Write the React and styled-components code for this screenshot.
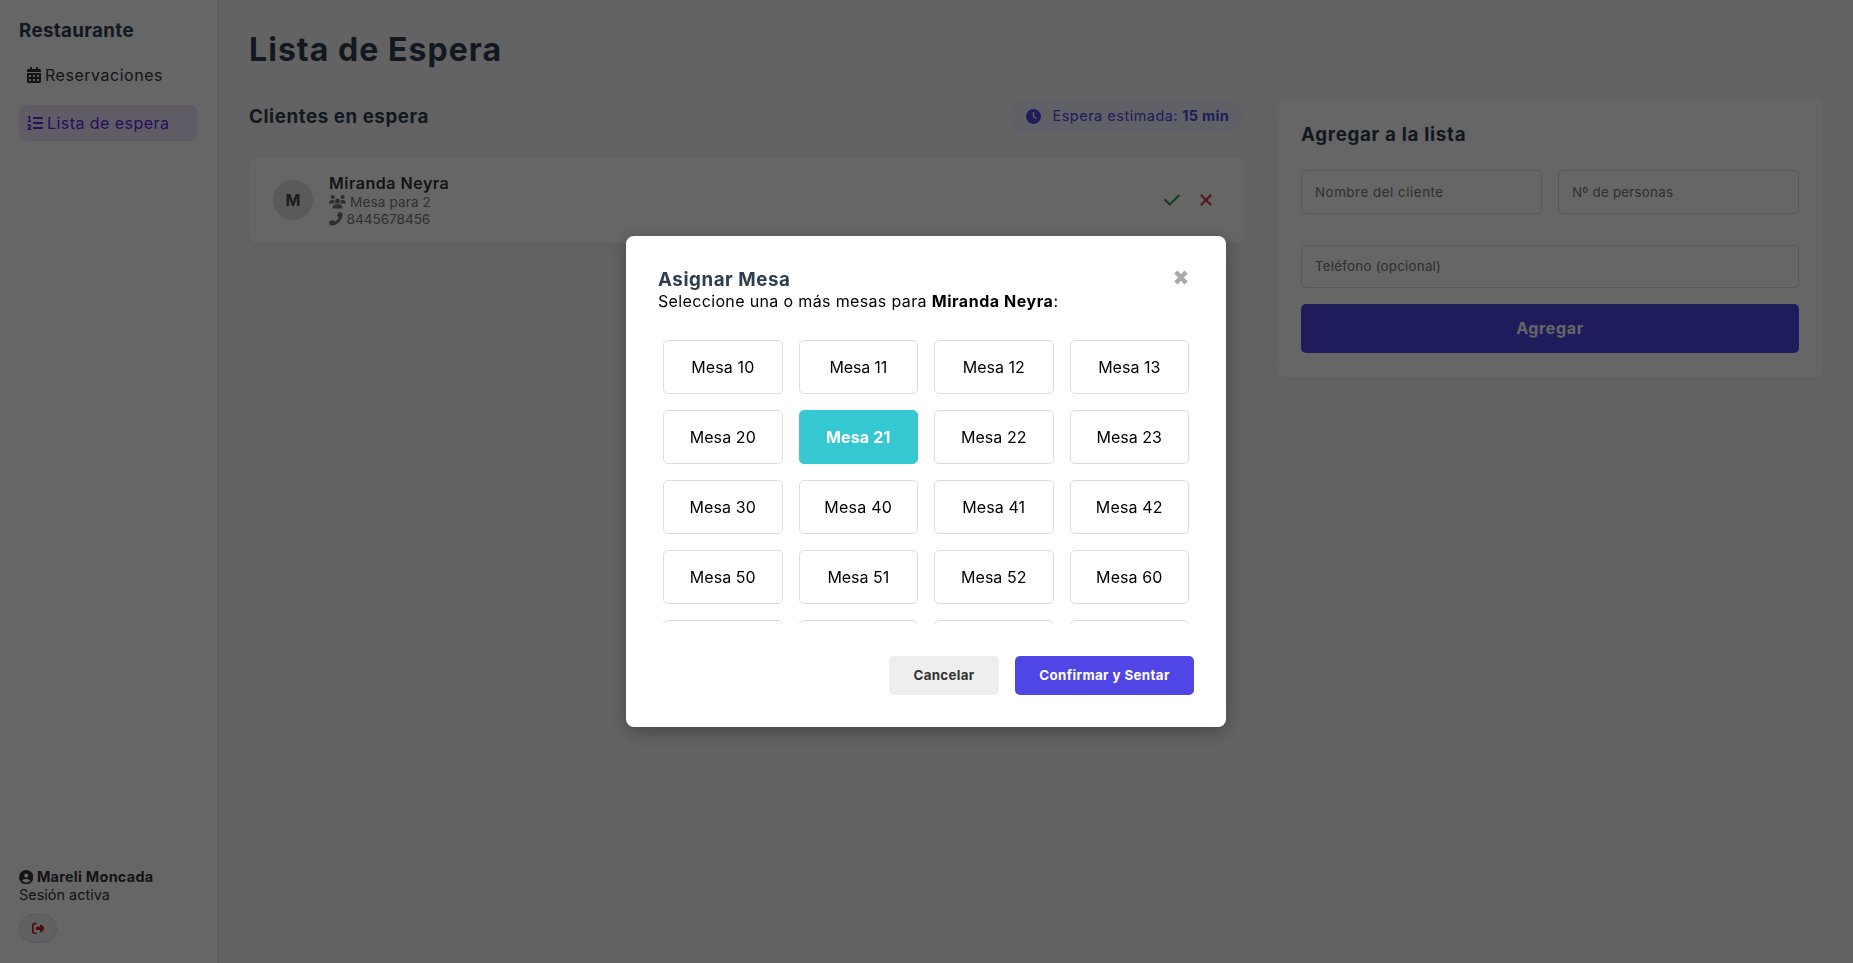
import React from "react";
import styled, { createGlobalStyle, css } from "styled-components";
import {
  FaCalendarDays,
  FaListOl,
  FaCircleUser,
  FaRightFromBracket,
  FaClock,
  FaUsers,
  FaPhoneFlip,
  FaCheck,
  FaXmark,
} from "react-icons/fa6";

const GlobalStyle = createGlobalStyle`
  *, *::before, *::after { box-sizing: border-box; }
  body {
    margin: 0;
    font-family: "Inter", "Liberation Sans", sans-serif;
    font-size: 16px;
    color: #333;
    background: #f7f7f7;
    overflow: hidden;
  }
  h1, h3, p { margin: 0; }
  button, input { font-family: inherit; }
  svg { display: block; flex: none; }
`;

const Page = styled.div`
  display: flex;
  height: 100vh;
`;

/* Tracking is given in em, per label */
const Label = styled.span`
  letter-spacing: ${(p) => p.$track || 0}em;
  font-weight: ${(p) => p.$weight || "inherit"};
  white-space: nowrap;
`;

const Heading = styled.h3`
  height: 23px;
  font-size: 18.72px;
  line-height: 24px;
  font-weight: 700;
  color: #2c3e50;
  letter-spacing: ${(p) => p.$track}em;
`;

/* Sidebar */
const Sidebar = styled.aside`
  display: flex;
  flex-direction: column;
  flex: none;
  width: 219px;
  padding: 19px 20px 20px 19px;
  background: #fff;
  border-right: 1px solid #ddd;
`;

const Nav = styled.nav`
  display: flex;
  flex-direction: column;
  gap: 12px;
  margin-top: 15px;
`;

const NavItem = styled.a`
  display: flex;
  align-items: center;
  gap: 4px;
  height: 36px;
  padding: 0 8px;
  border-radius: 8px;
  font-weight: 400;
  color: ${(p) => (p.$active ? "#5f22e8" : "#333")};
  background: ${(p) => (p.$active ? "#ede7ff" : "transparent")};
`;

const CalendarIcon = styled(FaCalendarDays)`
  width: 14px;
  height: 16px;
`;

const UsersIcon = styled(FaUsers)`
  width: 17px;
  height: 13.6px;
`;

const UserBox = styled.div`
  margin-top: auto;
  font-size: 14.4px;
  line-height: 18px;
`;

const UserName = styled.div`
  display: flex;
  align-items: center;
  gap: 3.5px;
  font-weight: 700;
`;

const LogoutButton = styled.button`
  display: flex;
  align-items: center;
  justify-content: center;
  width: 38px;
  height: 29px;
  margin-top: 10px;
  padding: 0;
  border: 1px solid #ddd;
  border-radius: 15px;
  background: #f0f2f5;
  color: #c8141e;
`;

/* Main area */
const Main = styled.main`
  flex: 1;
  padding: 30px;
`;

const Title = styled.h1`
  margin-bottom: 30px;
  font-size: 32px;
  line-height: 39px;
  font-weight: 700;
  color: #2c3e50;
  letter-spacing: 0.033em;
`;

const Columns = styled.div`
  display: grid;
  grid-template-columns: 1fr 546px;
  gap: 32px;
  align-items: start;
`;

const ListHeader = styled.div`
  display: flex;
  align-items: center;
  justify-content: space-between;
  height: 34px;
  margin-bottom: 24px;
`;

const WaitPill = styled.div`
  display: flex;
  align-items: center;
  width: 235px;
  height: 34px;
  padding-left: 16px;
  border-radius: 17px;
  background: #eef2ff;
  color: #4f46e5;
  font-size: 14.4px;
  font-weight: 400;
`;

const PillText = styled.span`
  display: flex;
  gap: 4px;
  margin-left: 11.5px;
  padding-bottom: 1px;
`;

const card = css`
  background: #fff;
  border-radius: 8px;
  box-shadow: 0 4px 12px rgba(0, 0, 0, 0.04);
`;

const ClientCard = styled.article`
  ${card}
  display: flex;
  align-items: center;
  gap: 16px;
  height: 86px;
  padding: 0 30px 0 24px;
`;

const Avatar = styled.div`
  display: grid;
  place-items: center;
  width: 40px;
  height: 40px;
  border-radius: 50%;
  background: #e0e0e0;
  color: #444;
  font-weight: 700;
`;

const ClientInfo = styled.div`
  flex: 1;
`;

const ClientName = styled.div`
  height: 20.5px;
  line-height: 20px;
  font-weight: 600;
`;

const ClientDetail = styled.div`
  display: flex;
  align-items: center;
  gap: 4px;
  height: 17px;
  font-size: 13.6px;
  color: #777;
`;

const Actions = styled.div`
  display: flex;
  align-items: center;
  gap: 16px;
`;

const IconButton = styled.button`
  display: flex;
  padding: 0;
  border: 0;
  background: none;
  font-size: 18px;
  color: ${(p) => p.$color};
`;

const FormCard = styled.form`
  ${card}
  padding: 24px;
`;

const FieldRow = styled.div`
  display: grid;
  grid-template-columns: repeat(${(p) => p.$cols}, 1fr);
  gap: 16px;
  margin-top: ${(p) => p.$top}px;
`;

const Input = styled.input`
  width: 100%;
  height: ${(p) => p.$height}px;
  padding: 0 13px ${(p) => (p.$height % 2 ? 1 : 0)}px;
  border: 1px solid #ddd;
  border-radius: 5px;
  background: #fff;
  font-size: 13.33px;
  letter-spacing: ${(p) => p.$track}em;
  outline: none;
  &::placeholder { color: #757575; }
`;

const AddButton = styled.button`
  width: 100%;
  height: 49px;
  margin-top: 16px;
  padding: 0 0 1px;
  border: 0;
  border-radius: 5px;
  background: #4f46e5;
  color: #fff;
  font-size: 16px;
  font-weight: 700;
`;

/* Modal */
const Overlay = styled.div`
  position: fixed;
  inset: 0;
  display: grid;
  place-items: center;
  padding-right: 1px;
  background: rgba(0, 0, 0, 0.6);
`;

const Dialog = styled.section`
  width: 600px;
  padding: 32px;
  border-radius: 8px;
  background: #fff;
  color: #000;
  box-shadow: 0 5px 20px rgba(0, 0, 0, 0.3);
`;

const DialogTop = styled.header`
  display: flex;
  justify-content: space-between;
  height: 23px;
`;

const CloseButton = styled.button`
  display: flex;
  align-self: flex-start;
  margin: 2px 6px 0 0;
  padding: 0;
  border: 0;
  background: none;
  color: #aaa;
`;

const Prompt = styled.p`
  display: flex;
  line-height: 20px;
`;

const TableGrid = styled.div`
  display: grid;
  grid-template-columns: repeat(4, 1fr);
  grid-auto-rows: 54px;
  gap: 16px;
  height: 289px;
  margin-top: 24px;
  padding: 5px;
  overflow: hidden;
`;

const TableOption = styled.div`
  display: grid;
  place-items: center;
  border: 1px solid ${(p) => (p.$selected ? "#35c8d3" : "#ddd")};
  border-radius: 5px;
  background: ${(p) => (p.$selected ? "#35c8d3" : "#fff")};
  color: ${(p) => (p.$selected ? "#fff" : "#000")};
  font-weight: ${(p) => (p.$selected ? 700 : 400)};
`;

const DialogActions = styled.footer`
  display: flex;
  justify-content: flex-end;
  gap: 16px;
  margin-top: 32px;
`;

const DialogButton = styled.button`
  width: ${(p) => (p.$primary ? 179 : 110)}px;
  height: 39px;
  padding: 0 0 1px;
  border: 0;
  border-radius: 5px;
  background: ${(p) => (p.$primary ? "#4f46e5" : "#eee")};
  color: ${(p) => (p.$primary ? "#fff" : "#333")};
  font-size: 13.33px;
  font-weight: 700;
`;

const TABLES = [
  [10, 0.008], [11, -0.01], [12, 0.002], [13, 0.001],
  [20, 0.005], [21, 0.009], [22, 0.002], [23, 0],
  [30, 0.006], [40, 0.015], [41, 0.005], [42, 0.01],
  [50, 0.005], [51, -0.002], [52, 0.002], [60, 0.005],
];

export default function App() {
  return (
    <>
      <GlobalStyle />
      <Page>
        <Sidebar>
          <Heading $track={0.02}>Restaurante</Heading>
          <Nav>
            <NavItem>
              <CalendarIcon />
              <Label $track={0.033}>Reservaciones</Label>
            </NavItem>
            <NavItem $active>
              <FaListOl size={16} />
              <Label $track={0.028}>Lista de espera</Label>
            </NavItem>
          </Nav>
          <UserBox>
            <UserName>
              <FaCircleUser size={14.4} />
              <Label $track={0.019}>Mareli Moncada</Label>
            </UserName>
            <Label $track={0.002}>Sesión activa</Label>
            <LogoutButton type="button" aria-label="Salir">
              <FaRightFromBracket size={12.8} />
            </LogoutButton>
          </UserBox>
        </Sidebar>

        <Main>
          <Title>Lista de Espera</Title>
          <Columns>
            <section>
              <ListHeader>
                <Heading $track={0.031}>Clientes en espera</Heading>
                <WaitPill>
                  <FaClock size={15} />
                  <PillText>
                    <Label $track={0.038}>Espera estimada:</Label>
                    <Label $track={0.024} $weight={700}>15 min</Label>
                  </PillText>
                </WaitPill>
              </ListHeader>
              <ClientCard>
                <Avatar>M</Avatar>
                <ClientInfo>
                  <ClientName><Label $track={0.033}>Miranda Neyra</Label></ClientName>
                  <ClientDetail>
                    <UsersIcon />
                    <Label $track={0.008}>Mesa para 2</Label>
                  </ClientDetail>
                  <ClientDetail>
                    <FaPhoneFlip size={13.6} />
                    <Label $track={-0.003}>8445678456</Label>
                  </ClientDetail>
                </ClientInfo>
                <Actions>
                  <IconButton type="button" $color="#28a745" aria-label="Asignar"><FaCheck /></IconButton>
                  <IconButton type="button" $color="#dc3545" aria-label="Quitar"><FaXmark /></IconButton>
                </Actions>
              </ClientCard>
            </section>

            <FormCard>
              <Heading $track={0.038}>Agregar a la lista</Heading>
              <FieldRow $cols={2} $top={24}>
                <Input $height={44} $track={0.041} placeholder="Nombre del cliente" />
                <Input $height={44} $track={0.018} placeholder="Nº de personas" />
              </FieldRow>
              <FieldRow $cols={1} $top={31}>
                <Input $height={43} $track={0.018} placeholder="Teléfono (opcional)" />
              </FieldRow>
              <AddButton type="button"><Label $track={0.04}>Agregar</Label></AddButton>
            </FormCard>
          </Columns>
        </Main>
      </Page>

      <Overlay>
        <Dialog role="dialog">
          <DialogTop>
            <Heading $track={0.031}>Asignar Mesa</Heading>
            <CloseButton type="button" aria-label="Cerrar">
              <svg width="14" height="15" viewBox="0 0 14 15" fill="none" stroke="currentColor" strokeWidth="4.4">
                <path d="M1.9 2L12.1 13M12.1 2L1.9 13" />
              </svg>
            </CloseButton>
          </DialogTop>
          <Prompt>
            <Label $track={0.022}>Seleccione una o más mesas para&nbsp;</Label>
            <Label $track={0.034} $weight={700}>Miranda Neyra</Label>
            <Label>:</Label>
          </Prompt>
          <TableGrid>
            {TABLES.map(([n, track]) => (
              <TableOption key={n} $selected={n === 21}>
                <Label $track={track}>Mesa {n}</Label>
              </TableOption>
            ))}
            <TableOption />
            <TableOption />
            <TableOption />
            <TableOption />
          </TableGrid>
          <DialogActions>
            <DialogButton type="button"><Label $track={0.023}>Cancelar</Label></DialogButton>
            <DialogButton type="button" $primary><Label $track={0.029}>Confirmar y Sentar</Label></DialogButton>
          </DialogActions>
        </Dialog>
      </Overlay>
    </>
  );
}
